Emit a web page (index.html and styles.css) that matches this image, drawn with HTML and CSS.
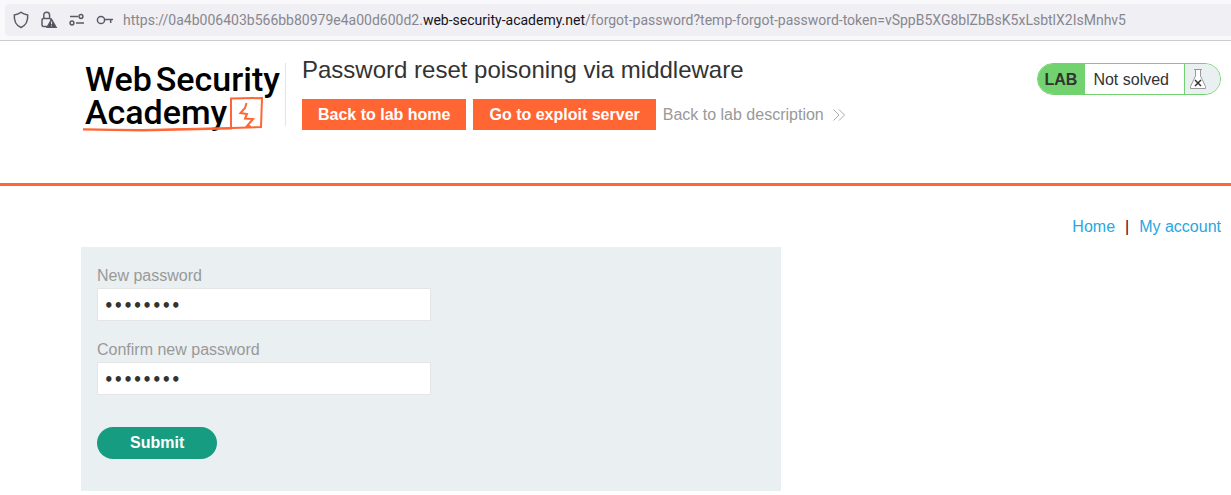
FILE: index.html
```html
<!DOCTYPE html>
<html lang="en">
<head>
<meta charset="utf-8">
<title>Password reset poisoning via middleware</title>
<link rel="stylesheet" href="styles.css">
</head>
<body>
<div class="toolbar">
  <div class="address-bar">
    <div class="address-icons">
      <svg width="18" height="18" viewBox="0 0 18 18"><path d="M9 1.2C7 2.9 4.7 3.5 2.3 3.9 2 9.2 3.600 14.300 9 16.500 14.400 14.300 16 9.200 15.700 3.900 13.300 3.500 11 2.900 9 1.200Z"/></svg>
      <svg width="18" height="18" viewBox="0 0 18 18"><path d="M8 15.500H3.500Q2 15.500 2 14V9Q2 7.500 3.500 7.500H9.500Q11 7.500 11 9M3.800 7.500V4.500Q3.800 1.300 6.700 1.300 9.600 1.300 9.600 4.500V7.500"/><path class="solid" d="M11.500 8.500 16 16.200H7.200Z"/><path class="cut" d="M11.600 10.500V13.300M11.600 14.300V15.300"/></svg>
      <svg width="18" height="18" viewBox="0 0 18 18"><path d="M2 5.500H10M8 12H16"/><circle cx="13" cy="5.500" r="1.900"/><circle cx="4" cy="12" r="1.900"/></svg>
      <svg width="18" height="18" viewBox="0 0 18 18"><circle cx="5" cy="9" r="3.600"/><path d="M8.600 8.500H17M14.700 8.500V12"/></svg>
    </div>
    <div class="url">https://0a4b006403b566bb80979e4a00d600d2.<span class="domain">web-security-academy.net</span>/forgot-password?temp-forgot-password-token=vSppB5XG8blZbBsK5xLsbtlX2IsMnhv5</div>
  </div>
</div>
<header class="lab-header">
  <div class="logo">
    <div class="logo-line"><span>Web</span> <span>Security</span></div>
    <div class="logo-line">Academy</div>
    <svg class="logo-mark" width="200" height="75" viewBox="0 0 200 75"><path d="M1 69.500 60 70.500 149 68.500V38.500L180 38 179 67 150 68" stroke-width="2"/><path d="M1 69 60 69.500 149 67.500" stroke-width="1"/><path d="M164.500 43 163 48 158.500 53 165 54 163 58.500 171 59 165 66 169 66.500" stroke-width="2"/></svg>
  </div>
  <div class="lab-title">
    <h1>Password reset poisoning via middleware</h1>
    <div class="lab-links">
      <a class="button" href="#">Back to lab home</a>
      <a class="button" href="#">Go to exploit server</a>
      <a class="description" href="#">Back to lab description <svg width="12" height="12" viewBox="0 0 12 12"><path d="M.500 .500 6 6 .500 11.500M6 .500 11.500 6 6 11.500"/></svg></a>
    </div>
  </div>
  <div class="status">
    <span class="status-tag">LAB</span>
    <span class="status-text">Not solved</span>
    <span class="status-icon"><svg width="18" height="22" viewBox="0 0 18 22"><path class="flask" d="M5 1.500H13M6.500 1.500V8L1.500 18.500V20.500H16.500V18.500L11.500 8V1.500"/><path class="cross" d="M6 12 12 18M12 12 6 18"/></svg></span>
  </div>
</header>
<main>
  <nav><a href="#">Home</a><span>|</span><a href="#">My account</a></nav>
  <form>
    <label for="password">New password</label>
    <input id="password" type="password" value="password">
    <label for="confirm">Confirm new password</label>
    <input id="confirm" type="password" value="password">
    <button type="button">Submit</button>
  </form>
</main>
</body>
</html>
```
FILE: styles.css
```css
* { box-sizing: border-box; }
body {
  margin: 0;
  background: #fff;
  color: #333332;
  font: 16px/20px "Liberation Sans", Arial, sans-serif;
}
a { text-decoration: none; }
svg { fill: none; flex: none; }

.toolbar {
  padding: 4px 0 4px 5px;
  background: #f9f9fb;
  border-bottom: 1px solid #ccc;
}
.address-bar {
  display: flex;
  align-items: center;
  gap: 9px;
  height: 32px;
  padding-left: 7px;
  border-radius: 4px 0 0 4px;
  background: #f0eff4;
}
.address-icons { display: flex; gap: 10px; stroke: #5b5b66; stroke-width: 1.5; }
.solid { fill: #4b4b56; }
.cut { stroke: #f0eff4; stroke-width: 1; }
.url {
  color: #87878e;
  font: 14px/20px Roboto, "Open Sans", sans-serif;
  white-space: nowrap;
}
.domain { color: #15141a; }

.lab-header {
  display: flex;
  align-items: flex-start;
  padding: 22px 10px 53px 81px;
  border-bottom: 3px solid #ff6633;
}
.logo {
  position: relative;
  width: 205px;
  height: 63px;
  padding-left: 4px;
  border-right: 1px solid #e5e5e5;
  color: #000;
  font: 500 34px/33px Roboto, sans-serif;
  white-space: nowrap;
}
.logo-line { display: flex; gap: 4px; }
.logo-mark { position: absolute; left: 1px; top: -3px; stroke: #ff6633; }
.lab-title { flex: 1; padding-left: 16px; }
h1 { margin: -7px 0 15px; font-size: 24px; line-height: 28px; font-weight: 400; }
.lab-links { display: flex; align-items: center; gap: 7px; }
.button {
  padding: 6px 16px 5px;
  background: #ff6633;
  color: #fff;
  font-weight: 700;
}
.description {
  display: flex;
  align-items: center;
  gap: 9px;
  color: #999;
  stroke: #aaa;
}
.status {
  display: flex;
  height: 32px;
  overflow: hidden;
  border: 1px solid #72d26f;
  border-radius: 16px;
  line-height: 32px;
}
.status-tag { padding: 0 8px 0 7px; background: #72d26f; font-weight: 700; }
.status-text { padding: 0 15px 0 8px; border-right: 1px solid #72d26f; }
.status-icon { display: flex; align-items: center; width: 35px; padding-left: 4px; background: #eaeff2; }
.flask { fill: #fff; stroke: #999; }
.cross { stroke: #333332; stroke-width: 1.5; }

main { padding: 31px 10px 4px 81px; }
nav { display: flex; justify-content: flex-end; gap: 10px; margin-bottom: 10px; color: #3d0d26; }
nav a { color: #29a7df; }
form {
  display: flex;
  flex-direction: column;
  align-items: flex-start;
  max-width: 700px;
  padding: 19px 16px 32px;
  background: #eaeff2;
}
label { margin-bottom: 2px; color: #999; }
input {
  width: 50%;
  height: 33px;
  margin: 0 0 19px;
  padding: 2px 6px 0;
  border: 1px solid #e5e5e5;
  background: #fff;
  color: #333332;
  font: 700 15px/20px "DejaVu Sans", sans-serif;
}
button {
  height: 32px;
  margin-top: 13px;
  padding: 0 33px;
  border: 0;
  border-radius: 16px;
  background: #169c80;
  color: #fff;
  font: inherit;
  font-weight: 700;
}
```
